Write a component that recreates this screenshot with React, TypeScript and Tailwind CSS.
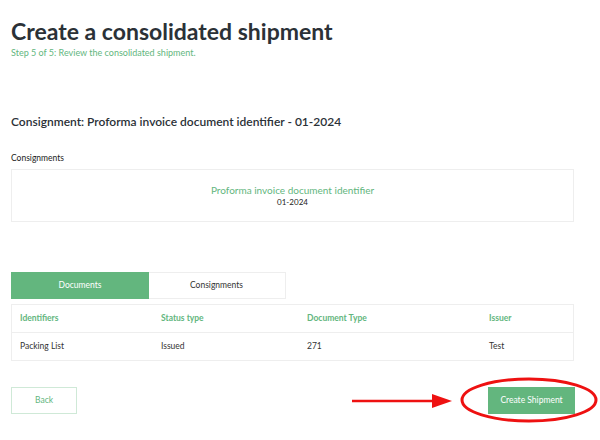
import React from 'react';

const columns = ['Identifiers', 'Status type', 'Document Type', 'Issuer'];
const rows = [['Packing List', 'Issued', '271', 'Test']];
const colWidths = ['w-[141px]', 'w-[146px]', 'w-[182px]', 'flex-1'];

export default function App() {
  return (
    <div className="relative w-[600px] h-[440px] bg-white overflow-hidden" style={{ fontFamily: 'Lato, "Noto Sans", sans-serif' }}>
      <div className="w-[563px] ml-[11px] flex flex-col">
        <h1 className="mt-[16px] text-[23px] leading-[30px] font-bold text-[#2b3137]">Create a consolidated shipment</h1>
        <p className="mt-[1px] text-[9px] leading-[12px] text-[#63b67e]">Step 5 of 5: Review the consolidated shipment.</p>

        <h2 className="mt-[54px] text-[12px] leading-[18px] font-semibold text-[#2b3137]">
          Consignment: Proforma invoice document identifier - 01-2024
        </h2>

        <p className="mt-[21px] text-[8.5px] leading-[12px] text-[#222]">Consignments</p>
        <div className="mt-[5px] h-[53px] border border-[#eeeeee] flex flex-col items-center justify-center">
          <span className="text-[10px] leading-[13px] text-[#63b67e]">Proforma invoice document identifier</span>
          <span className="text-[8px] leading-[11px] text-[#222]">01-2024</span>
        </div>

        <div className="mt-[50px] flex w-[275px] h-[27px] border border-[#eeeeee]">
          <div className="w-[138px] -m-px h-[27px] bg-[#63b67e] text-white flex items-center justify-center text-[8.5px]">Documents</div>
          <div className="flex-1 flex items-center justify-center text-[8.5px] text-[#333]">Consignments</div>
        </div>

        <div className="mt-[5px] border border-[#eeeeee]">
          <div className="flex h-[28px] items-center px-[8px] border-b border-[#eeeeee]">
            {columns.map((c, i) => (
              <div key={c} className={`${colWidths[i]} text-[8.5px] font-bold text-[#63b67e]`}>{c}</div>
            ))}
          </div>
          {rows.map((r, ri) => (
            <div key={ri} className="flex h-[27px] items-center px-[8px]">
              {r.map((v, i) => (
                <div key={i} className={`${colWidths[i]} text-[8.5px] text-[#333]`}>{v}</div>
              ))}
            </div>
          ))}
        </div>

        <div className="mt-[26px] flex justify-between items-center">
          <button className="w-[66px] h-[27px] border border-[#cfe9d7] text-[#63b67e] text-[8.5px]">Back</button>
          <button className="w-[87px] h-[27px] bg-[#63b67e] text-white text-[8.5px] -mr-px">Create Shipment</button>
        </div>
      </div>

      {/* annotation */}
      <svg className="absolute left-0 top-0 pointer-events-none" width="600" height="440">
        <ellipse cx="529" cy="400" rx="67" ry="21" fill="none" stroke="#ee1111" strokeWidth="3" />
        <line x1="352" y1="401" x2="436" y2="401" stroke="#ee1111" strokeWidth="2.5" />
        <polygon points="432,394 452,401 432,408" fill="#ee1111" />
      </svg>
    </div>
  );
}
